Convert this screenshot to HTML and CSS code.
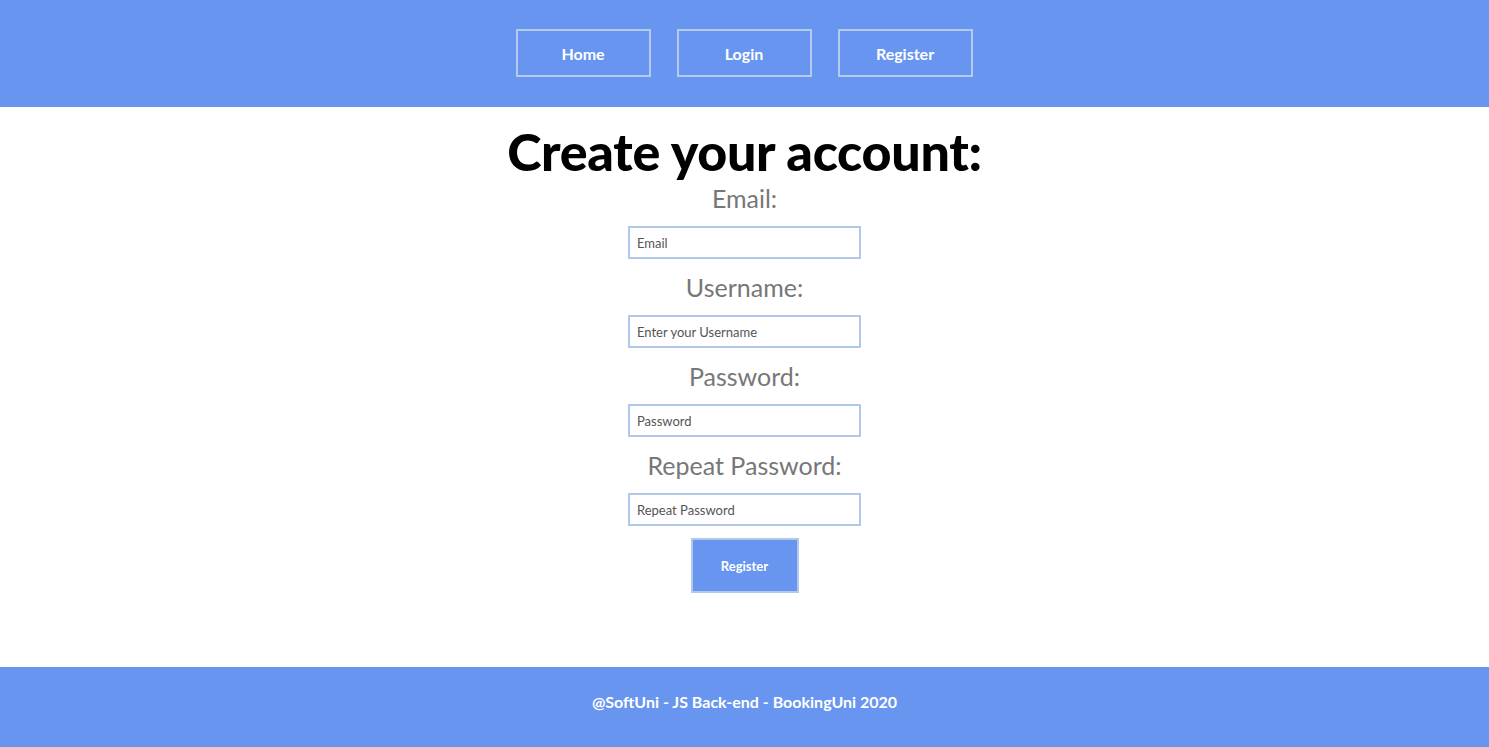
FILE: index.html
```html
<!DOCTYPE html>
<html lang="en">
<head>
<meta charset="utf-8">
<title>Register</title>
<link rel="stylesheet" href="styles.css">
</head>
<body>
<header class="site-header">
  <nav class="nav">
    <a class="nav-btn" href="#">Home</a>
    <a class="nav-btn" href="#">Login</a>
    <a class="nav-btn" href="#">Register</a>
  </nav>
</header>
<main class="content">
  <h1 class="title">Create your account:</h1>
  <form class="form">
    <label class="label" for="email">Email:</label>
    <input class="field" id="email" type="text" placeholder="Email">
    <label class="label" for="username">Username:</label>
    <input class="field" id="username" type="text" placeholder="Enter your Username">
    <label class="label" for="password">Password:</label>
    <input class="field" id="password" type="password" placeholder="Password">
    <label class="label" for="repeat">Repeat Password:</label>
    <input class="field" id="repeat" type="password" placeholder="Repeat Password">
    <button class="submit" type="button">Register</button>
  </form>
</main>
<footer class="site-footer">
  <p class="footer-text">@SoftUni - JS Back-end - BookingUni 2020</p>
</footer>
</body>
</html>
```

FILE: styles.css
```css
* { box-sizing: border-box; }
html, body { margin: 0; padding: 0; }
body {
  font-family: Lato, "Open Sans", sans-serif;
  background: #fff;
  height: 747px;
  display: flex;
  flex-direction: column;
}
.site-header {
  background: #6795f0;
  height: 107px;
  display: flex;
  justify-content: center;
  align-items: flex-start;
  padding-top: 29px;
}
.nav {
  display: flex;
  gap: 26px;
  margin-left: -1px;
}
.nav-btn {
  width: 135px;
  height: 48px;
  border: 2px solid #b4cbf0;
  color: #fff;
  text-decoration: none;
  font-weight: 700;
  font-size: 16px;
  display: flex;
  align-items: center;
  justify-content: center;
}
.content {
  flex: 1;
  display: flex;
  flex-direction: column;
  align-items: center;
}
.title {
  margin: 14px 0 0;
  font-size: 52px;
  line-height: 60px;
  font-weight: 900;
  color: #000;
  letter-spacing: -0.3px;
}
.form {
  display: flex;
  flex-direction: column;
  align-items: center;
}
.label {
  font-size: 25px;
  line-height: 30px;
  color: #777;
  margin-top: 13px;
  margin-bottom: 13px;
}
.form .label:first-child { margin-top: 2px; margin-bottom: 13px; }
.field {
  width: 233px;
  height: 33px;
  border: 2px solid #b2c8e8;
  padding: 0 7px;
  font-family: Lato, sans-serif;
  font-size: 13px;
  color: #333;
  outline: none;
}
.field::placeholder { color: #555; }
.submit {
  margin-top: 12px;
  width: 108px;
  height: 55px;
  background: #6795f0;
  border: 2px solid #b2c8e8;
  color: #fff;
  font-family: Lato, sans-serif;
  font-weight: 700;
  font-size: 13px;
}
.site-footer {
  background: #6795f0;
  height: 80px;
  display: flex;
  align-items: center;
  justify-content: center;
  padding-bottom: 12px;
}
.footer-text {
  margin: 0;
  color: #fff;
  font-weight: 700;
  font-size: 16px;
}
```
